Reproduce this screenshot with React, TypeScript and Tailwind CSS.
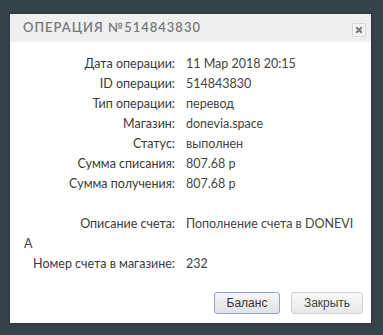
import React from 'react';

const rows: Array<[string, string]> = [
  ['Дата операции:', '11 Мар 2018 20:15'],
  ['ID операции:', '514843830'],
  ['Тип операции:', 'перевод'],
  ['Магазин:', 'donevia.space'],
  ['Статус:', 'выполнен'],
  ['Сумма списания:', '807.68 р'],
  ['Сумма получения:', '807.68 р'],
];

function Row({ label, children }: { label: string; children: React.ReactNode }) {
  return (
    <div className="leading-[20px]">
      <span className="inline-block w-[151px] text-right text-[#3a3a3a]">{label}</span>
      <span className="ml-[11px] text-[#444]">{children}</span>
    </div>
  );
}

export default function App() {
  return (
    <div className="w-[383px] h-[335px] bg-[#37434b] pt-[14px] pl-[10px] overflow-hidden">
      <div className="w-[361px] h-[309px] bg-white flex flex-col shadow-[0_0_3px_rgba(0,0,0,0.4)]">
        <div className="h-[28px] bg-[#efefef] flex items-center justify-between pl-[13px] pr-[5px]">
          <span className="font-['Lato',sans-serif] text-[13px] font-semibold tracking-[1px] text-[#7a7a7a]">
            ОПЕРАЦИЯ №514843830
          </span>
          <button className="w-[14px] h-[14px] mt-[4px] rounded-[2px] border border-[#d6d6d6] bg-[#f4f4f4] flex items-center justify-center">
            <svg width="8" height="8" viewBox="0 0 8 8">
              <path d="M1.2 1.2L6.8 6.8M6.8 1.2L1.2 6.8" stroke="#7e7e7e" strokeWidth="2.2" />
            </svg>
          </button>
        </div>
        <div className="pl-[14px] pt-[12px] font-['Lato',sans-serif] text-[12.5px]">
          {rows.map(([label, value]) => (
            <Row key={label} label={label}>
              {value}
            </Row>
          ))}
          <div className="h-[20px]" />
          <Row label="Описание счета:">
            Пополнение счета в DONEVI
            <br />A
          </Row>
          <Row label="Номер счета в магазине:">232</Row>
        </div>
        <div className="mt-auto flex justify-end gap-[11px] pr-[8px] pb-[9px] font-['Liberation_Sans',sans-serif] text-[12px] text-[#333]">
          <button className="w-[66px] h-[22px] rounded-[3px] border border-[#8aa6d6] bg-gradient-to-b from-[#f6f6f6] to-[#e2e2e2]">
            Баланс
          </button>
          <button className="w-[72px] h-[22px] rounded-[3px] border border-[#d0d0d0] bg-gradient-to-b from-[#f8f8f8] to-[#e8e8e8] text-[#444]">
            Закрыть
          </button>
        </div>
      </div>
    </div>
  );
}
